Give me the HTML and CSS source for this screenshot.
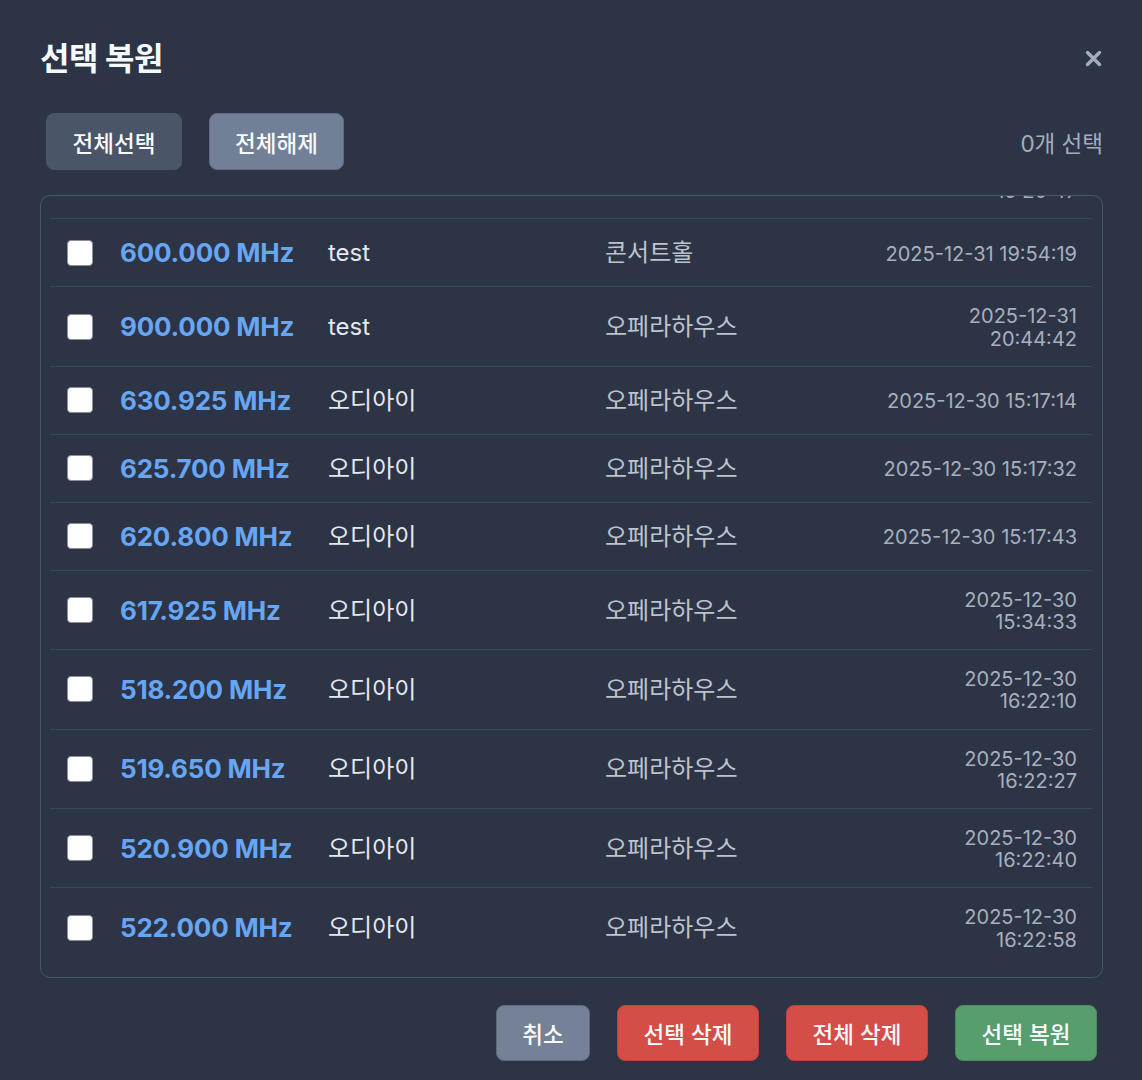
FILE: index.html
```
<!DOCTYPE html>
<html lang="ko">
<head>
<meta charset="utf-8">
<title>선택 복원</title>
<link rel="stylesheet" href="styles.css">
</head>
<body>
<div class="modal">
  <div class="header">
    <h1 class="title">선택 복원</h1>
    <button class="close" aria-label="닫기">
      <svg width="17" height="17" viewBox="0 0 17 17"><path d="M2.5 2.5 L14.5 14.5 M14.5 2.5 L2.5 14.5" stroke="#a0aec0" stroke-width="3.4" stroke-linecap="round"/></svg>
    </button>
  </div>
  <div class="toolbar">
    <div class="tool-buttons">
      <button class="btn btn-dark">전체선택</button>
      <button class="btn btn-gray">전체해제</button>
    </div>
    <span class="count">0개 선택</span>
  </div>
  <div class="list">
    <div class="list-inner">
      <div class="row">
        <span class="check"></span>
        <span class="freq">640.000 MHz</span>
        <span class="name">오디아이</span>
        <span class="loc">오페라하우스</span>
        <span class="date"><span>2025-12-30</span> <span class="time">15:20:47</span></span>
      </div>
      <div class="row">
        <span class="check"></span>
        <span class="freq">600.000 MHz</span>
        <span class="name">test</span>
        <span class="loc">콘서트홀</span>
        <span class="date"><span>2025-12-31</span> <span>19:54:19</span></span>
      </div>
      <div class="row">
        <span class="check"></span>
        <span class="freq">900.000 MHz</span>
        <span class="name">test</span>
        <span class="loc">오페라하우스</span>
        <span class="date"><span>2025-12-31</span> <span class="time">20:44:42</span></span>
      </div>
      <div class="row">
        <span class="check"></span>
        <span class="freq">630.925 MHz</span>
        <span class="name">오디아이</span>
        <span class="loc">오페라하우스</span>
        <span class="date"><span>2025-12-30</span> <span>15:17:14</span></span>
      </div>
      <div class="row">
        <span class="check"></span>
        <span class="freq">625.700 MHz</span>
        <span class="name">오디아이</span>
        <span class="loc">오페라하우스</span>
        <span class="date"><span>2025-12-30</span> <span>15:17:32</span></span>
      </div>
      <div class="row">
        <span class="check"></span>
        <span class="freq">620.800 MHz</span>
        <span class="name">오디아이</span>
        <span class="loc">오페라하우스</span>
        <span class="date"><span>2025-12-30</span> <span>15:17:43</span></span>
      </div>
      <div class="row">
        <span class="check"></span>
        <span class="freq">617.925 MHz</span>
        <span class="name">오디아이</span>
        <span class="loc">오페라하우스</span>
        <span class="date"><span>2025-12-30</span> <span class="time">15:34:33</span></span>
      </div>
      <div class="row">
        <span class="check"></span>
        <span class="freq">518.200 MHz</span>
        <span class="name">오디아이</span>
        <span class="loc">오페라하우스</span>
        <span class="date"><span>2025-12-30</span> <span class="time">16:22:10</span></span>
      </div>
      <div class="row">
        <span class="check"></span>
        <span class="freq">519.650 MHz</span>
        <span class="name">오디아이</span>
        <span class="loc">오페라하우스</span>
        <span class="date"><span>2025-12-30</span> <span class="time">16:22:27</span></span>
      </div>
      <div class="row">
        <span class="check"></span>
        <span class="freq">520.900 MHz</span>
        <span class="name">오디아이</span>
        <span class="loc">오페라하우스</span>
        <span class="date"><span>2025-12-30</span> <span class="time">16:22:40</span></span>
      </div>
      <div class="row">
        <span class="check"></span>
        <span class="freq">522.000 MHz</span>
        <span class="name">오디아이</span>
        <span class="loc">오페라하우스</span>
        <span class="date"><span>2025-12-30</span> <span class="time">16:22:58</span></span>
      </div>
    </div>
  </div>
  <div class="footer">
    <button class="btn btn-cancel">취소</button>
    <button class="btn btn-red">선택 삭제</button>
    <button class="btn btn-red">전체 삭제</button>
    <button class="btn btn-green">선택 복원</button>
  </div>
</div>
</body>
</html>
```

FILE: styles.css
```
* { box-sizing: border-box; }

html, body {
  margin: 0;
  padding: 0;
  background: #2d3446;
}

body {
  font-family: "Inter", "Noto Sans CJK KR", sans-serif;
  color: #e2e8f0;
  width: 1142px;
  height: 1080px;
  overflow: hidden;
}

.modal {
  padding: 0 39px 0 40px;
}

.header {
  display: flex;
  align-items: center;
  justify-content: space-between;
  padding-top: 37px;
}

.title {
  margin: 0;
  font-size: 32px;
  line-height: 42px;
  font-weight: 700;
  color: #f7fafc;
  letter-spacing: -0.5px;
  position: relative;
  top: 1px;
}

.close {
  background: none;
  border: none;
  padding: 0;
  margin-right: 1px;
  width: 17px;
  height: 17px;
  display: flex;
}

.toolbar {
  margin-top: 34px;
  display: flex;
  align-items: center;
  justify-content: space-between;
}

.tool-buttons {
  display: flex;
  gap: 27px;
  padding-left: 6px;
}

.btn {
  font-family: "Inter", "Noto Sans CJK KR", sans-serif;
  border-radius: 8px;
  border: 1px solid transparent;
  color: #f7fafc;
  cursor: pointer;
  padding: 0;
}

.toolbar .btn {
  height: 57px;
  font-size: 22.5px;
  font-weight: 500;
}

.btn-dark {
  width: 136px;
  background: #4a5568;
  border-color: #4a5568;
}

.btn-gray {
  width: 135px;
  background: #718096;
  border-color: #5f6c80;
}

.count {
  font-size: 22.5px;
  color: #a0aec0;
  font-weight: 400;
}

.list {
  margin-top: 25px;
  border: 1px solid #4a5568;
  border-radius: 10px;
  overflow: hidden;
  padding: 0 10px 10px 9px;
}

.list-inner {
  margin-top: -56px;
}

.row {
  display: grid;
  grid-template-columns: 53px 208px 277px 1fr auto;
  align-items: center;
  padding: 17px 15px 17px 17px;
  border-bottom: 1px solid #3c4557;
}

.row:last-child {
  border-bottom: none;
}

.check {
  display: block;
  width: 26px;
  height: 26px;
  background: #ffffff;
  border: 1.5px solid #8a8f98;
  border-radius: 4px;
}

.freq {
  font-size: 26px;
  line-height: 33px;
  font-weight: 700;
  color: #66a6f2;
  letter-spacing: -0.2px;
}

.name {
  font-size: 24px;
  line-height: 33px;
  color: #e4e8ef;
  font-weight: 400;
}

.loc {
  font-size: 24px;
  line-height: 33px;
  color: #bcc3cd;
  font-weight: 400;
}

.date {
  font-size: 20px;
  line-height: 22.2px;
  color: #a7b0bd;
  text-align: right;
  white-space: nowrap;
  position: relative;
  top: 1px;
}

.date .time {
  display: block;
}

.footer {
  margin-top: 27px;
  display: flex;
  justify-content: flex-end;
  gap: 27px;
  padding-right: 6px;
}

.footer .btn {
  height: 56px;
  width: 142px;
  font-size: 22.5px;
  font-weight: 500;
}

.footer .btn-cancel {
  width: 94px;
  background: #748196;
  border-color: #5d697c;
}

.btn-red {
  background: #d44d47;
  border-color: #c2413c;
}

.btn-green {
  background: #589d6c;
  border-color: #4b8c5e;
}
```
